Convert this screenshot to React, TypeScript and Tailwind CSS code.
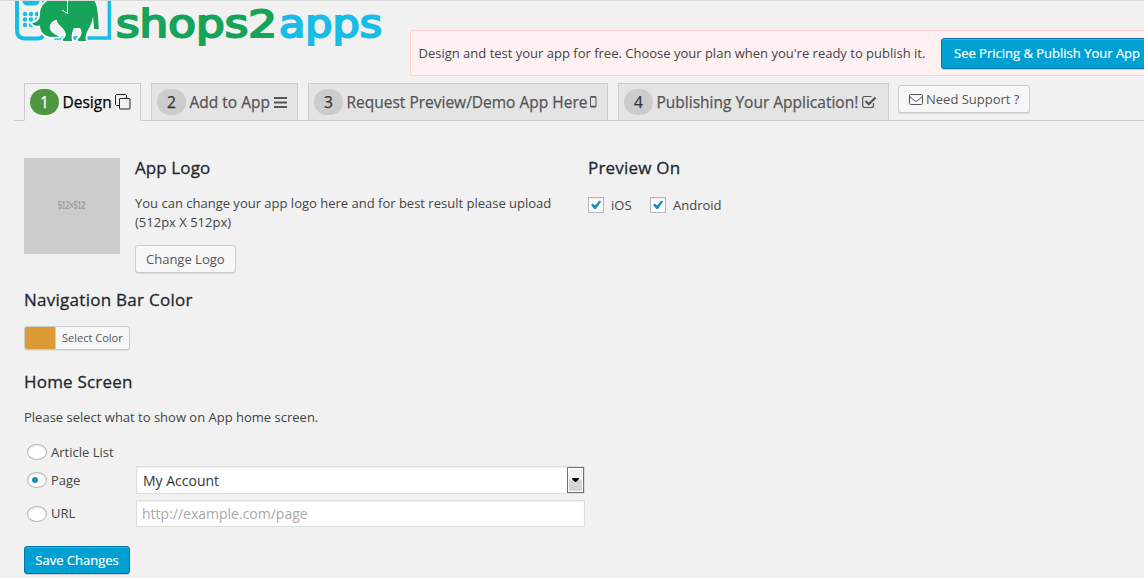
import React from "react";

const btn =
  "box-border flex items-center rounded-[3px] border border-[#ccc] bg-[#f7f7f7] text-[#555] shadow-[0_1px_0_rgba(0,0,0,0.08)] whitespace-nowrap";
const primary =
  "flex items-center rounded-[3px] border border-[#0073aa] bg-[#00a0d2] pt-px text-[13px] text-white shadow-[inset_0_1px_0_rgba(120,200,230,0.5),0_1px_0_rgba(0,0,0,0.15)] whitespace-nowrap [-webkit-text-stroke:0.2px_#fff]";

function Logo() {
  return (
    <svg className="-mt-px block h-[54px] w-[380px] shrink-0" viewBox="10 0 380 54">
      <path d="M17 0V30Q17 38.500 25 38.500H38Q44 38.500 44 31V0" fill="none" stroke="#17bde6" strokeWidth="4" />
      <path d="M22 0H40Q39 5.500 34 5.500H28Q23 5.500 22 0Z" fill="#17bde6" />
      {[14, 19.5, 25].map((y) =>
        [25, 31, 37].map((x) => <circle key={`${x}-${y}`} cx={x} cy={y} r="2.2" fill="#17bde6" />)
      )}
      <path d="M54 38H109.300V0" fill="none" stroke="#17bde6" strokeWidth="3.400" />
      <path
        d="M49 0C43 3 40 8 40 14C40 19 38 22 32 23.500C34 26 37 26 40 25.500C40 32 45 37 52 37L60 36.500C53 34 49 31 50 26C51 22 54 20 57 20C57 25 62 26 64 30C67 34 66 37 63 39V41H72C71 36 72 32 74 28H80C83 32 81 37 78 39V41H86C85 37 86 34 88 30C90 27 92 23 93 16L94 29H99C98 24 99 7 94 0Z"
        fill="#16a35a"
        stroke="#fff"
        strokeWidth="3.500"
        paintOrder="stroke"
        strokeLinejoin="round"
      />
      <path d="M67.500 0V13.500L62 10" fill="none" stroke="#fff" strokeWidth="1" />
      <text x="116" y="37" textLength="161" lengthAdjust="spacingAndGlyphs" fontFamily="DejaVu Sans" fontSize="36.500" fill="#16a35a" stroke="#16a35a" strokeWidth="2">shops2</text>
      <text x="279" y="37" textLength="103" lengthAdjust="spacingAndGlyphs" fontFamily="DejaVu Sans" fontSize="36.500" fill="#17bde6" stroke="#17bde6" strokeWidth="2">apps</text>
    </svg>
  );
}

function CopyIcon() {
  return (
    <svg className="ml-[3px] h-4 w-4" viewBox="0 0 16 16" fill="none" stroke="#222" strokeWidth="1">
      <path d="M4 11.500H1.500L.500 10.500V1.500L1.500 .500H10.500L11.500 1.500V4" />
      <rect x="4.500" y="4.500" width="10.500" height="10.500" rx=".5" />
    </svg>
  );
}
function BarsIcon() {
  return (
    <svg className="ml-1 h-[13px] w-[13px]" viewBox="0 0 13 13" fill="#555">
      <path d="M0 1h13v2H0zM0 5.500h13v2H0zM0 10h13v2H0z" />
    </svg>
  );
}
function MobileIcon() {
  return (
    <svg className="ml-[3px] h-[12px] w-[7px]" viewBox="0 0 7 12" fill="none" stroke="#555">
      <rect x=".5" y=".5" width="5.500" height="10.500" rx="1" />
      <path d="M.500 1H6M.500 10.500H6" strokeWidth="1.500" />
    </svg>
  );
}
function CheckSquareIcon() {
  return (
    <svg className="ml-1 h-[14px] w-[15px]" viewBox="0 0 15 14" fill="none" stroke="#555">
      <path d="M11.500 8V10.500Q11.500 12.500 9.500 12.500H2.700Q.700 12.500 .700 10.500V3.500Q.700 1.500 2.700 1.500H9.500" strokeWidth="1.200" />
      <path d="M3.500 6L6.800 9.200L13.500 2.500" strokeWidth="2.300" />
    </svg>
  );
}

function Tab({ n, label, icon, width, active }: { n: number; label: string; icon: React.ReactNode; width: string; active?: boolean }) {
  return (
    <div className={`flex h-[38px] shrink-0 items-center whitespace-nowrap border border-[#ccc] pl-[5px] text-[15.500px] [-webkit-text-stroke:0.25px] ${width} ${active ? "border-b-[#f1f1f1] bg-[#f1f1f1] text-black" : "bg-[#e4e4e4] text-[#555]"}`}>
      <span className={`mr-[3.500px] flex h-[26px] w-[29px] shrink-0 items-center justify-center rounded-full pt-px ${active ? "bg-[#4f9641] text-white" : "bg-[#ccc] text-[#333]"}`}>{n}</span>
      <span className="pt-[2px]">{label}</span>
      {icon}
    </div>
  );
}

function Check({ label }: { label: string }) {
  return (
    <label className="flex items-center text-[13px]">
      <span className="mr-[7px] flex h-4 w-4 items-center justify-center border border-[#b4b9be] bg-white shadow-[inset_0_1px_2px_rgba(0,0,0,0.1)]">
        <svg className="h-3 w-3" viewBox="0 0 12 12">
          <path d="M1 6L3 4.500L5 6.500L9.500 1.500L11.300 2.300L6 10H4.300Z" fill="#1e8cbe" />
        </svg>
      </span>
      <span className="pt-px">{label}</span>
    </label>
  );
}

function Radio({ label, on }: { label: string; on?: boolean }) {
  return (
    <label className="flex w-[109px] shrink-0 items-center text-[13px]">
      <span className="mr-1 flex h-4 w-5 items-center rounded-[50%] border border-[#b4b9be] bg-white pl-1 shadow-[inset_0_1px_2px_rgba(0,0,0,0.1)]">
        {on && <span className="h-1.5 w-1.5 rounded-full bg-[#1e8cbe]" />}
      </span>
      <span className="pt-px">{label}</span>
    </label>
  );
}

const h = "text-[17px] leading-6 text-[#23282d] [-webkit-text-stroke:0.3px]";

export default function App() {
  return (
    <div className="h-[578px] w-[1144px] overflow-hidden border-t border-[#dadada] bg-[#f1f1f1] font-['Open_Sans',sans-serif] text-[13px] text-[#444]">
      <header className="flex h-[82px] pl-[10px]">
        <Logo />
        <div className="ml-5 mt-[29px] flex h-[46px] w-[760px] shrink-0 items-center rounded-[3px] border border-[#ffd2d6] bg-[#fff1f1] pl-[7.500px]">
          <span className="w-[522.500px] shrink-0 whitespace-nowrap pt-px">Design and test your app for free. Choose your plan when you're ready to publish it.</span>
          <button className={`${primary} h-[31px] w-[220px] pl-3`}>See Pricing &amp; Publish Your App</button>
        </div>
      </header>

      <nav className="ml-[14px] flex h-[38px] items-start border-b border-[#ccc] pl-[10px]">
        <div className="flex gap-[10px]">
          <Tab n={1} label="Design" icon={<CopyIcon />} width="w-[117px]" active />
          <Tab n={2} label="Add to App" icon={<BarsIcon />} width="w-[147px]" />
          <Tab n={3} label="Request Preview/Demo App Here" icon={<MobileIcon />} width="w-[300px]" />
          <Tab n={4} label="Publishing Your Application!" icon={<CheckSquareIcon />} width="w-[271px]" />
        </div>
        <button className={`${btn} ml-[9px] mt-[2px] h-[28px] w-[132px] pl-[10px] text-[13px]`}>
          <svg className="mr-[3px] h-[11px] w-[14px]" viewBox="0 0 14 11" fill="none" stroke="#555">
            <rect x=".5" y=".5" width="13" height="10" rx="1" />
            <path d="M.500 2.500L6 7Q7 7.600 8 7L13.500 2.500" />
          </svg>
          <span className="pt-px">Need Support ?</span>
        </button>
      </nav>

      <main className="pl-6">
        <section className="flex h-[167px] pt-[37px]">
          <div className="flex h-24 w-24 items-center justify-center bg-[#ccc]">
            <span className="scale-x-[0.7] font-['Liberation_Sans',sans-serif] text-[10px] font-bold leading-4 text-[#9c9c9c]">512×512</span>
          </div>
          <div className="ml-[15px] w-[453px]">
            <h2 className={`${h} -mt-[2px] tracking-[0.1px]`}>App Logo</h2>
            <p className="mt-[14px] w-[430px] leading-[19px]">You can change your app logo here and for best result please upload (512px X 512px)</p>
            <button className={`${btn} mt-[13px] h-[28px] px-[10px] pt-px text-[13px]`}>Change Logo</button>
          </div>
          <div>
            <h2 className={`${h} -mt-[2px] tracking-[0.2px]`}>Preview On</h2>
            <div className="mt-[15px] flex gap-[18.500px]">
              <Check label="iOS" />
              <Check label="Android" />
            </div>
          </div>
        </section>

        <section className="h-[82px]">
          <h2 className={`${h} tracking-[0.27px]`}>Navigation Bar Color</h2>
          <button className={`${btn} mt-[14px] h-[24px] w-[106px] overflow-hidden text-[11px]`}>
            <span className="mr-[6px] h-full w-[31px] shrink-0 border-r border-[#ccc] bg-[#dd9933]" />
            Select Color
          </button>
        </section>

        <section>
          <h2 className={`${h} tracking-[0.2px]`}>Home Screen</h2>
          <p className="mt-[13px] leading-5">Please select what to show on App home screen.</p>
          <div className="flex flex-col pl-[3px] pt-[15px]">
            <div className="flex h-[24px] items-start"><Radio label="Article List" /></div>
            <div className="flex h-[28px] items-center">
              <Radio label="Page" on />
              <div className="flex h-[28px] w-[449px] items-center justify-between border border-[#ddd] bg-white pl-[6px] text-[14px] text-[#32373c] shadow-[inset_0_1px_2px_rgba(0,0,0,0.07)]">
                My Account
                <span className="flex h-[26px] w-[17px] items-center justify-center border border-[#707070] bg-linear-to-b from-[#f2f2f2] from-50% to-[#d5d5d5] to-50% shadow-[inset_0_0_0_1px_#fff]">
                  <svg className="h-1 w-[7px]" viewBox="0 0 7 4"><path d="M0 0H7V1L4 4H3L0 1Z" /></svg>
                </span>
              </div>
            </div>
            <div className="mt-[6px] flex h-[27px] items-center">
              <Radio label="URL" />
              <input className="h-[27px] w-[449px] border border-[#ddd] bg-white px-[5px] text-[14px] shadow-[inset_0_1px_2px_rgba(0,0,0,0.07)] placeholder:text-[#a9a9a9]" placeholder="http://example.com/page" />
            </div>
          </div>
          <button className={`${primary} mt-[19px] h-[28px] w-[106px] justify-center`}>Save Changes</button>
        </section>
      </main>
    </div>
  );
}
